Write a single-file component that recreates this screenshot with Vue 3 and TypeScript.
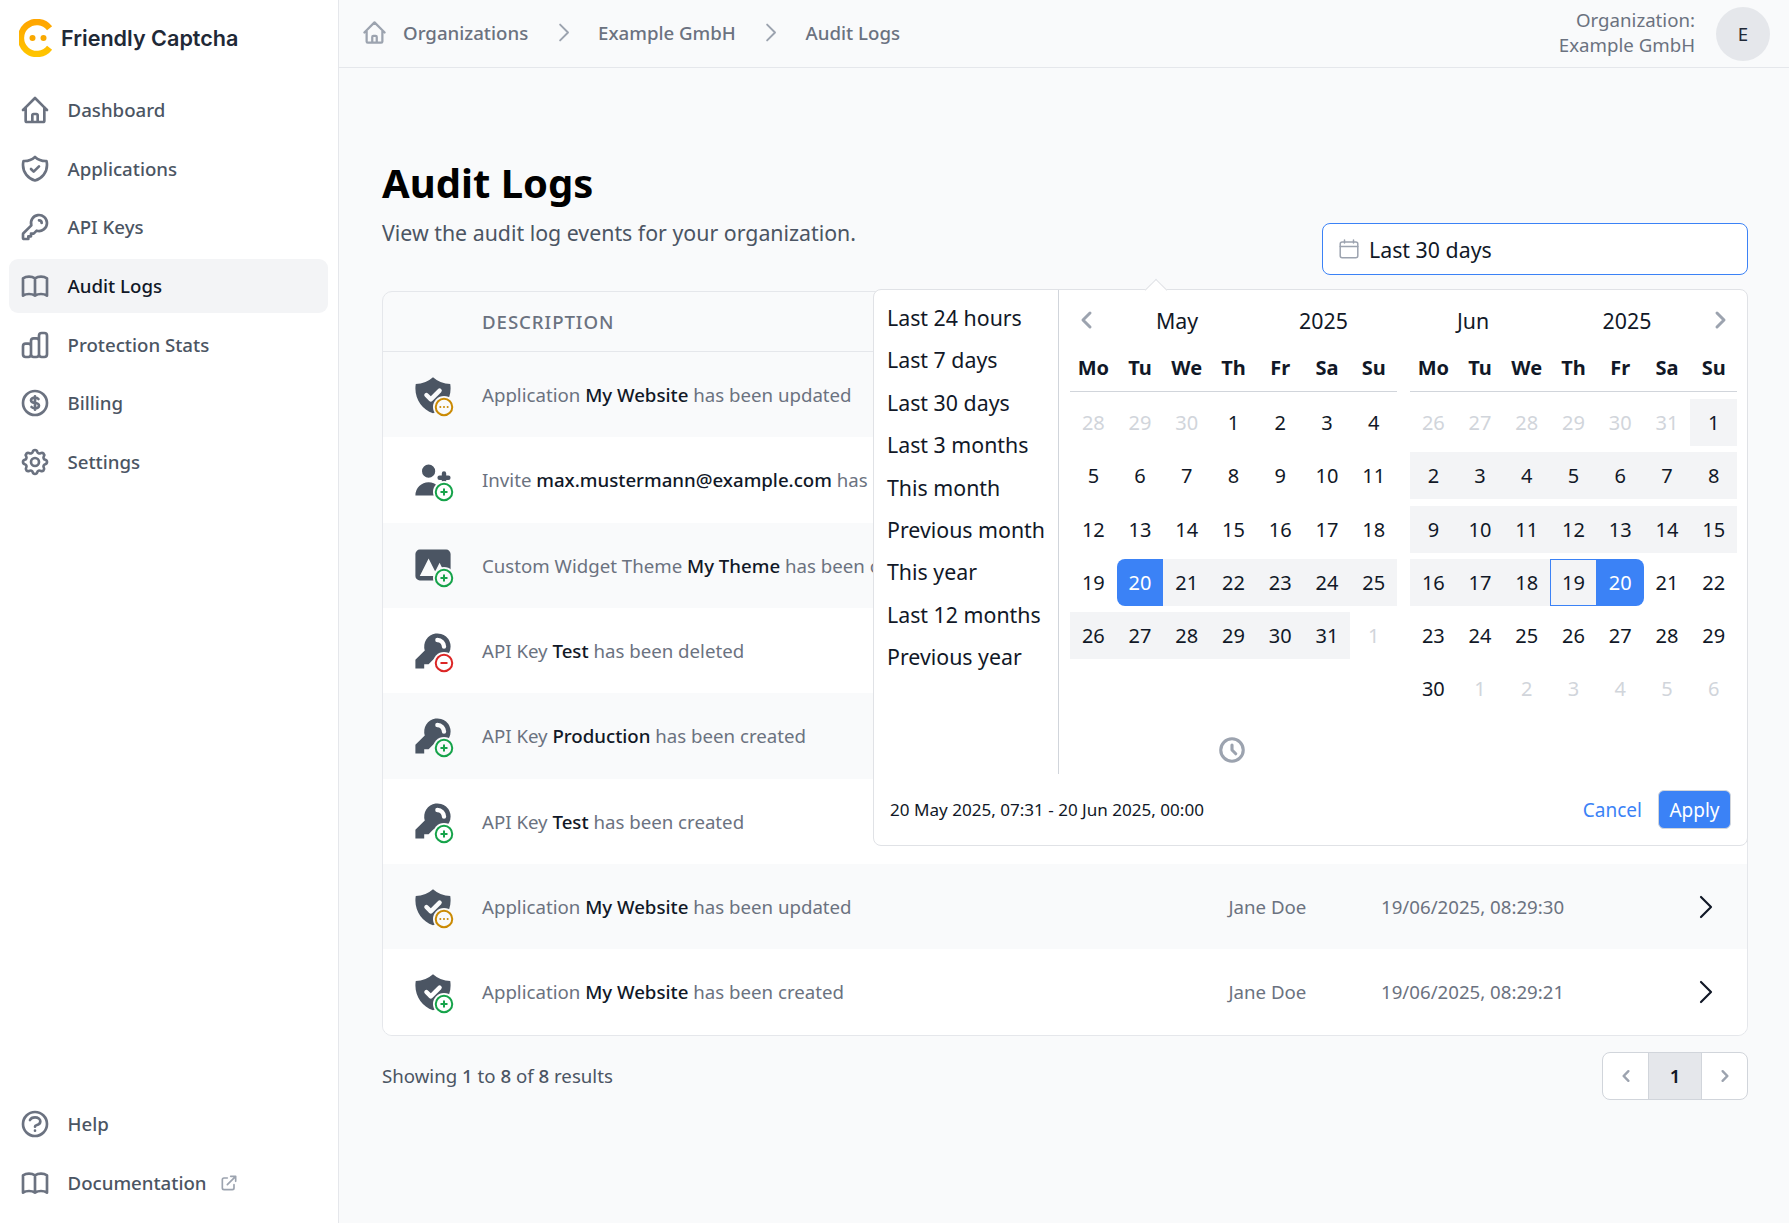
<script setup lang="ts">
interface NavItem {
  label: string
  icon: string
  active?: boolean
  external?: boolean
}

interface LogRow {
  icon: string
  kind: 'add' | 'update' | 'remove'
  before: string
  name: string
  after: string
}

interface DayCell {
  day: number
  muted?: boolean
  range?: boolean
  start?: boolean
  end?: boolean
  today?: boolean
}

const outline: Record<string, string> = {
  home: 'M3 12l2-2m0 0l7-7 7 7M5 10v10a1 1 0 001 1h3m10-11l2 2m-2-2v10a1 1 0 01-1 1h-3m-6 0a1 1 0 001-1v-4a1 1 0 011-1h2a1 1 0 011 1v4a1 1 0 001 1m-6 0h6',
  shield: 'M9 12l2 2 4-4m5.618-4.016A11.955 11.955 0 0112 2.944a11.955 11.955 0 01-8.618 3.04A12.02 12.02 0 003 9c0 5.591 3.824 10.29 9 11.622 5.176-1.332 9-6.03 9-11.622 0-1.042-.133-2.052-.382-3.016z',
  key: 'M15 7a2 2 0 012 2m4 0a6 6 0 01-7.743 5.743L11 17H9v2H7v2H4a1 1 0 01-1-1v-2.586a1 1 0 01.293-.707l5.964-5.964A6 6 0 1121 9z',
  book: 'M12 6.253v13m0-13C10.832 5.477 9.246 5 7.5 5S4.168 5.477 3 6.253v13C4.168 18.477 5.754 18 7.5 18s3.332.477 4.5 1.253m0-13C13.168 5.477 14.754 5 16.5 5c1.747 0 3.332.477 4.5 1.253v13C19.832 18.477 18.247 18 16.5 18c-1.746 0-3.332.477-4.5 1.253',
  chart: 'M9 19v-6a2 2 0 00-2-2H5a2 2 0 00-2 2v6a2 2 0 002 2h2a2 2 0 002-2zm0 0V9a2 2 0 012-2h2a2 2 0 012 2v10m-6 0a2 2 0 002 2h2a2 2 0 002-2m0 0V5a2 2 0 012-2h2a2 2 0 012 2v14a2 2 0 01-2 2h-2a2 2 0 01-2-2z',
  dollar: 'M12 8c-1.657 0-3 .895-3 2s1.343 2 3 2 3 .895 3 2-1.343 2-3 2m0-8c1.11 0 2.08.402 2.599 1M12 8V7m0 1v8m0 0v1m0-1c-1.11 0-2.08-.402-2.599-1M21 12a9 9 0 11-18 0 9 9 0 0118 0z',
  cog: 'M10.325 4.317c.426-1.756 2.924-1.756 3.35 0a1.724 1.724 0 002.573 1.066c1.543-.94 3.31.826 2.37 2.37a1.724 1.724 0 001.065 2.572c1.756.426 1.756 2.924 0 3.35a1.724 1.724 0 00-1.066 2.573c.94 1.543-.826 3.31-2.37 2.37a1.724 1.724 0 00-2.572 1.065c-.426 1.756-2.924 1.756-3.35 0a1.724 1.724 0 00-2.573-1.066c-1.543.94-3.31-.826-2.37-2.37a1.724 1.724 0 00-1.065-2.572c-1.756-.426-1.756-2.924 0-3.35a1.724 1.724 0 001.066-2.573c-.94-1.543.826-3.31 2.37-2.37.996.608 2.296.07 2.572-1.065zM15 12a3 3 0 11-6 0 3 3 0 016 0z',
  help: 'M8.228 9c.549-1.165 2.03-2 3.772-2 2.21 0 4 1.343 4 3 0 1.4-1.278 2.575-3.006 2.907-.542.104-.994.54-.994 1.093m0 3h.01M21 12a9 9 0 11-18 0 9 9 0 0118 0z'
}

const solid: Record<string, string> = {
  shield: 'M2.166 4.999A11.954 11.954 0 0010 1.944 11.954 11.954 0 0017.834 5c.11.65.166 1.32.166 2.001 0 5.225-3.34 9.67-8 11.317C5.34 16.67 2 12.225 2 7c0-.682.057-1.35.166-2.001zm11.541 3.708a1 1 0 00-1.414-1.414L9 10.586 7.707 9.293a1 1 0 00-1.414 1.414l2 2a1 1 0 001.414 0l4-4z',
  user: 'M8 9a3 3 0 100-6 3 3 0 000 6zM8 11a6 6 0 016 6H2a6 6 0 016-6zM16 7a1 1 0 10-2 0v1h-1a1 1 0 100 2h1v1a1 1 0 102 0v-1h1a1 1 0 100-2h-1V7z',
  photo: 'M4 3a2 2 0 00-2 2v10a2 2 0 002 2h12a2 2 0 002-2V5a2 2 0 00-2-2H4zm12 12H4l4-8 3 6 2-4 3 6z',
  key: 'M18 8a6 6 0 01-7.743 5.743L10 14l-1 1-1 1H6v2H2v-4l4.257-4.257A6 6 0 1118 8zm-6-4a1 1 0 100 2 2 2 0 012 2 1 1 0 102 0 4 4 0 00-4-4z'
}

const badges: Record<LogRow['kind'], string> = {
  add: 'M12 9v3m0 0v3m0-3h3m-3 0H9m12 0a9 9 0 11-18 0 9 9 0 0118 0z',
  update: 'M8 12h.01M12 12h.01M16 12h.01M21 12a9 9 0 11-18 0 9 9 0 0118 0z',
  remove: 'M15 12H9m12 0a9 9 0 11-18 0 9 9 0 0118 0z'
}

const mainNav: NavItem[] = [
  { label: 'Dashboard', icon: 'home' },
  { label: 'Applications', icon: 'shield' },
  { label: 'API Keys', icon: 'key' },
  { label: 'Audit Logs', icon: 'book', active: true },
  { label: 'Protection Stats', icon: 'chart' },
  { label: 'Billing', icon: 'dollar' },
  { label: 'Settings', icon: 'cog' }
]

const bottomNav: NavItem[] = [
  { label: 'Help', icon: 'help' },
  { label: 'Documentation', icon: 'book', external: true }
]

const rows: (LogRow & { user: string; time: string })[] = [
  { icon: 'shield', kind: 'update', before: 'Application', name: 'My Website', after: 'has been updated', user: 'Jane Doe', time: '19/06/2025, 08:31:02' },
  { icon: 'user', kind: 'add', before: 'Invite', name: 'max.mustermann@example.com', after: 'has been created', user: 'Jane Doe', time: '19/06/2025, 08:30:48' },
  { icon: 'photo', kind: 'add', before: 'Custom Widget Theme', name: 'My Theme', after: 'has been created', user: 'Jane Doe', time: '19/06/2025, 08:30:31' },
  { icon: 'key', kind: 'remove', before: 'API Key', name: 'Test', after: 'has been deleted', user: 'Jane Doe', time: '19/06/2025, 08:30:12' },
  { icon: 'key', kind: 'add', before: 'API Key', name: 'Production', after: 'has been created', user: 'Jane Doe', time: '19/06/2025, 08:30:04' },
  { icon: 'key', kind: 'add', before: 'API Key', name: 'Test', after: 'has been created', user: 'Jane Doe', time: '19/06/2025, 08:29:51' },
  { icon: 'shield', kind: 'update', before: 'Application', name: 'My Website', after: 'has been updated', user: 'Jane Doe', time: '19/06/2025, 08:29:30' },
  { icon: 'shield', kind: 'add', before: 'Application', name: 'My Website', after: 'has been created', user: 'Jane Doe', time: '19/06/2025, 08:29:21' }
]

const presets = [
  'Last 24 hours',
  'Last 7 days',
  'Last 30 days',
  'Last 3 months',
  'This month',
  'Previous month',
  'This year',
  'Last 12 months',
  'Previous year'
]

const weekdays = ['Mo', 'Tu', 'We', 'Th', 'Fr', 'Sa', 'Su']

const mayDays: DayCell[] = [
  { day: 28, muted: true },
  { day: 29, muted: true },
  { day: 30, muted: true },
  ...[1, 2, 3, 4, 5, 6, 7, 8, 9, 10, 11, 12, 13, 14, 15, 16, 17, 18, 19].map((day) => ({ day })),
  { day: 20, start: true },
  ...[21, 22, 23, 24, 25, 26, 27, 28, 29, 30, 31].map((day) => ({ day, range: true })),
  { day: 1, muted: true }
]

const juneDays: DayCell[] = [
  ...[26, 27, 28, 29, 30, 31].map((day) => ({ day, muted: true })),
  ...[1, 2, 3, 4, 5, 6, 7, 8, 9, 10, 11, 12, 13, 14, 15, 16, 17, 18].map((day) => ({ day, range: true })),
  { day: 19, range: true, today: true },
  { day: 20, end: true },
  ...[21, 22, 23, 24, 25, 26, 27, 28, 29, 30].map((day) => ({ day })),
  ...[1, 2, 3, 4, 5, 6].map((day) => ({ day, muted: true }))
]
</script>

<template>
  <div class="app">
    <!-- Sidebar -->
    <aside class="sidebar">
      <div class="brand">
        <svg class="brand-logo" viewBox="0 0 38 38" fill="none">
          <defs>
            <linearGradient id="logo-grad" x1="0" y1="0" x2="0" y2="1">
              <stop offset="0" stop-color="#ffa600" />
              <stop offset="1" stop-color="#ffc400" />
            </linearGradient>
          </defs>
          <path d="M30.6 9.2A16 16 0 1 0 30.6 28.8" stroke="url(#logo-grad)" stroke-width="6.4" />
          <circle cx="13.5" cy="19" r="3" fill="#f9a800" />
          <circle cx="24.5" cy="19" r="3" fill="#f9a800" />
        </svg>
        <span class="brand-name">Friendly Captcha</span>
      </div>

      <nav class="nav">
        <a v-for="item in mainNav" :key="item.label" class="nav-item" :class="{ active: item.active }">
          <svg class="nav-icon" viewBox="0 0 24 24" fill="none" stroke="currentColor" stroke-width="2" stroke-linecap="round" stroke-linejoin="round">
            <path :d="outline[item.icon]" />
          </svg>
          <span>{{ item.label }}</span>
        </a>
      </nav>

      <nav class="nav nav-bottom">
        <a v-for="item in bottomNav" :key="item.label" class="nav-item">
          <svg class="nav-icon" viewBox="0 0 24 24" fill="none" stroke="currentColor" stroke-width="2" stroke-linecap="round" stroke-linejoin="round">
            <path :d="outline[item.icon]" />
          </svg>
          <span>{{ item.label }}</span>
          <svg v-if="item.external" class="ext-icon" viewBox="0 0 24 24" fill="none" stroke="currentColor" stroke-width="2" stroke-linecap="round" stroke-linejoin="round">
            <path d="M10 6H6a2 2 0 00-2 2v10a2 2 0 002 2h10a2 2 0 002-2v-4M14 4h6m0 0v6m0-6L10 14" />
          </svg>
        </a>
      </nav>
    </aside>

    <div class="main">
      <!-- Top bar -->
      <header class="topbar">
        <div class="crumbs">
          <svg class="crumb-home" viewBox="0 0 24 24" fill="none" stroke="currentColor" stroke-width="2" stroke-linecap="round" stroke-linejoin="round">
            <path :d="outline.home" />
          </svg>
          <span>Organizations</span>
          <svg class="crumb-sep" viewBox="0 0 24 24" fill="none" stroke="currentColor" stroke-width="1.7" stroke-linecap="round" stroke-linejoin="round">
            <path d="M9 5l7 7-7 7" />
          </svg>
          <span>Example GmbH</span>
          <svg class="crumb-sep" viewBox="0 0 24 24" fill="none" stroke="currentColor" stroke-width="1.7" stroke-linecap="round" stroke-linejoin="round">
            <path d="M9 5l7 7-7 7" />
          </svg>
          <span>Audit Logs</span>
        </div>
        <div class="org">
          <div class="org-text">
            <div>Organization:</div>
            <div>Example GmbH</div>
          </div>
          <div class="avatar">E</div>
        </div>
      </header>

      <main class="content">
        <div class="page-head">
          <div class="page-intro">
            <h1 class="page-title">Audit Logs</h1>
            <p class="page-sub">View the audit log events for your organization.</p>
          </div>

          <div class="date-field">
            <div class="date-input">
              <svg class="date-icon" viewBox="0 0 20 20" fill="none" stroke="currentColor" stroke-width="1.5" stroke-linecap="round">
                <rect x="1.2" y="3" width="17.6" height="15.8" rx="2" />
                <path d="M1.2 7.4h17.6M5.5 1v3M14.5 1v3" />
              </svg>
              <span>Last 30 days</span>
            </div>

            <!-- Date range popup -->
            <div class="picker">
              <span class="picker-arrow"></span>
              <div class="picker-body">
                <ul class="presets">
                  <li v-for="preset in presets" :key="preset">{{ preset }}</li>
                </ul>
                <div class="calendars">
                  <div class="calendar">
                    <div class="cal-head cal-head-left">
                      <svg class="cal-nav" viewBox="0 0 24 24" fill="none" stroke="currentColor" stroke-width="3" stroke-linecap="round" stroke-linejoin="round">
                        <path d="M15 19l-7-7 7-7" />
                      </svg>
                      <span>May</span>
                      <span>2025</span>
                    </div>
                    <div class="weekdays">
                      <span v-for="name in weekdays" :key="name">{{ name }}</span>
                    </div>
                    <div class="days">
                      <span
                        v-for="(cell, i) in mayDays"
                        :key="i"
                        class="day"
                        :class="{ muted: cell.muted, range: cell.range, start: cell.start, end: cell.end, today: cell.today }"
                      >{{ cell.day }}</span>
                    </div>
                    <div class="time-toggle">
                      <svg viewBox="0 0 24 24" fill="none" stroke="currentColor" stroke-width="2.5" stroke-linecap="round" stroke-linejoin="round">
                        <path d="M12 8v4l3 3m6-3a9 9 0 11-18 0 9 9 0 0118 0z" />
                      </svg>
                    </div>
                  </div>

                  <div class="calendar">
                    <div class="cal-head cal-head-right">
                      <span>Jun</span>
                      <span class="year-right">2025</span>
                      <svg class="cal-nav" viewBox="0 0 24 24" fill="none" stroke="currentColor" stroke-width="3" stroke-linecap="round" stroke-linejoin="round">
                        <path d="M9 5l7 7-7 7" />
                      </svg>
                    </div>
                    <div class="weekdays">
                      <span v-for="name in weekdays" :key="name">{{ name }}</span>
                    </div>
                    <div class="days">
                      <span
                        v-for="(cell, i) in juneDays"
                        :key="i"
                        class="day"
                        :class="{ muted: cell.muted, range: cell.range, start: cell.start, end: cell.end, today: cell.today }"
                      >{{ cell.day }}</span>
                    </div>
                  </div>
                </div>
              </div>
              <div class="picker-foot">
                <span>20 May 2025, 07:31 - 20 Jun 2025, 00:00</span>
                <div class="picker-actions">
                  <button class="btn-cancel">Cancel</button>
                  <button class="btn-apply">Apply</button>
                </div>
              </div>
            </div>
          </div>
        </div>

        <!-- Log table -->
        <div class="table">
          <div class="table-head">
            <span></span>
            <span>Description</span>
            <span>User</span>
            <span>Date</span>
            <span></span>
          </div>
          <div v-for="(row, i) in rows" :key="i" class="table-row">
            <div class="row-icon">
              <svg class="row-main" viewBox="0 0 20 20" fill="currentColor">
                <path fill-rule="evenodd" clip-rule="evenodd" :d="solid[row.icon]" />
              </svg>
              <svg class="row-badge" :class="row.kind" viewBox="0 0 24 24" fill="none" stroke="currentColor" stroke-width="2.2" stroke-linecap="round" stroke-linejoin="round">
                <path :d="badges[row.kind]" />
              </svg>
            </div>
            <div class="row-desc">{{ row.before }} <strong>{{ row.name }}</strong> {{ row.after }}</div>
            <div>{{ row.user }}</div>
            <div>{{ row.time }}</div>
            <svg class="row-chevron" viewBox="0 0 24 24" fill="none" stroke="currentColor" stroke-width="1.6" stroke-linecap="round" stroke-linejoin="round">
              <path d="M8.25 4.5l7.5 7.5-7.5 7.5" />
            </svg>
          </div>
        </div>

        <div class="table-foot">
          <span class="results">Showing <b>1</b> to <b>8</b> of <b>8</b> results</span>
          <div class="pager">
            <span class="pager-btn">
              <svg viewBox="0 0 20 20" fill="currentColor">
                <path d="M12.707 5.293a1 1 0 010 1.414L9.414 10l3.293 3.293a1 1 0 01-1.414 1.414l-4-4a1 1 0 010-1.414l4-4a1 1 0 011.414 0z" />
              </svg>
            </span>
            <span class="pager-current">1</span>
            <span class="pager-btn">
              <svg viewBox="0 0 20 20" fill="currentColor">
                <path d="M7.293 14.707a1 1 0 010-1.414L10.586 10 7.293 6.707a1 1 0 011.414-1.414l4 4a1 1 0 010 1.414l-4 4a1 1 0 01-1.414 0z" />
              </svg>
            </span>
          </div>
        </div>
      </main>
    </div>
  </div>
</template>

<style>
html,
body {
  margin: 0;
  background: #f9fafb;
}
</style>

<style scoped>
.app {
  display: flex;
  height: 100vh;
  overflow: hidden;
  background: #f9fafb;
  font-family: "Noto Sans", "Liberation Sans", sans-serif;
  font-size: 18.67px;
  color: #111827;
}

/* Sidebar */
.sidebar {
  width: 338px;
  flex-shrink: 0;
  display: flex;
  flex-direction: column;
  background: #ffffff;
  border-right: 1px solid #e5e7eb;
}

.brand {
  height: 76px;
  display: flex;
  align-items: center;
  gap: 4px;
  padding-left: 19px;
  margin-bottom: 7px;
}

.brand-logo {
  width: 38px;
  height: 38px;
  flex-shrink: 0;
}

.brand-name {
  font-family: Inter, "Liberation Sans", sans-serif;
  font-size: 21.6px;
  font-weight: 600;
  color: #1f2937;
}

.nav {
  display: flex;
  flex-direction: column;
  gap: 4.7px;
  padding: 0 10px 0 9px;
}

.nav-bottom {
  margin-top: auto;
  padding-bottom: 13px;
}

.nav-item {
  height: 54px;
  display: flex;
  align-items: center;
  gap: 16.5px;
  padding-left: 10px;
  border-radius: 9px;
  font-weight: 500;
  color: #4b5563;
}

.nav-item span {
  padding-bottom: 1px;
}

.nav-item.active {
  background: #f3f4f6;
  color: #111827;
}

.nav-icon {
  width: 32px;
  height: 32px;
  flex-shrink: 0;
  color: #6b7280;
}

.ext-icon {
  width: 20px;
  height: 20px;
  margin-left: -4px;
  color: #9ca3af;
}

/* Top bar */
.main {
  flex: 1;
  min-width: 0;
  display: flex;
  flex-direction: column;
}

.topbar {
  height: 67px;
  flex-shrink: 0;
  display: flex;
  align-items: center;
  justify-content: space-between;
  padding: 0 19px 0 22px;
  border-bottom: 1px solid #e5e7eb;
}

.crumbs {
  display: flex;
  align-items: center;
  padding-bottom: 2px;
  font-weight: 500;
  color: #6b7280;
}

.crumb-home {
  width: 27px;
  height: 27px;
  margin-right: 15px;
  color: #9ca3af;
}

.crumb-sep {
  width: 27px;
  height: 27px;
  margin: 0 21.4px;
  color: #9ca3af;
}

.org {
  display: flex;
  align-items: center;
  gap: 21px;
}

.org-text {
  padding-bottom: 4px;
  text-align: right;
  line-height: 25px;
  color: #6b7280;
}

.avatar {
  width: 54px;
  height: 54px;
  display: flex;
  align-items: center;
  justify-content: center;
  border-radius: 50%;
  background: #e5e7eb;
  color: #1f2937;
}

/* Content */
.content {
  flex: 1;
  padding: 93px 41px 0 43px;
}

.page-head {
  display: flex;
  align-items: flex-end;
  justify-content: space-between;
  margin-bottom: 16px;
}

.page-intro {
  padding-bottom: 28px;
}

.page-title {
  margin: 0;
  font-size: 40px;
  line-height: 44px;
  font-weight: 700;
  color: #000000;
}

.page-sub {
  margin: 14px 0 0;
  font-size: 21.33px;
  line-height: 28px;
  color: #4b5563;
}

.date-field {
  position: relative;
  width: 426px;
}

.date-input {
  height: 52px;
  box-sizing: border-box;
  display: flex;
  align-items: center;
  gap: 10px;
  padding-left: 16px;
  background: #ffffff;
  border: 1.5px solid #3b82f6;
  border-radius: 8px;
  font-size: 21.33px;
}

.date-icon {
  width: 20px;
  height: 20px;
  color: #9ca3af;
}

/* Date range popup */
.picker {
  position: absolute;
  top: calc(100% + 14px);
  right: 0;
  z-index: 10;
  width: 875px;
  box-sizing: border-box;
  background: #ffffff;
  border: 1px solid #e0e2e6;
  border-radius: 8px;
  font-size: 20px;
}

.picker-arrow {
  position: absolute;
  top: -8px;
  left: 274px;
  width: 15px;
  height: 15px;
  background: #ffffff;
  border-top: 1px solid #e0e2e6;
  border-left: 1px solid #e0e2e6;
  transform: rotate(45deg);
}

.picker-body {
  position: relative;
  display: flex;
  height: 484px;
}

.presets {
  flex-shrink: 0;
  width: 171px;
  margin: 0;
  padding: 7px 0 0 13px;
  list-style: none;
  border-right: 1px solid #d1d5db;
  font-size: 21.33px;
  line-height: 42.4px;
}

.calendars {
  display: flex;
  gap: 13px;
  padding-left: 11px;
}

.calendar {
  width: 327px;
}

.cal-head {
  display: grid;
  box-sizing: border-box;
  height: 62px;
  padding-bottom: 2px;
  align-items: center;
  text-align: center;
  font-size: 21.33px;
}

.cal-head-left {
  grid-template-columns: 34px 146px 147px;
}

.cal-head-right {
  grid-template-columns: 126px 167px 34px;
}

.year-right {
  padding-left: 15px;
}

.cal-nav {
  width: 24px;
  height: 24px;
  justify-self: center;
  color: #9ca3af;
}

.weekdays {
  display: grid;
  grid-template-columns: repeat(7, 1fr);
  height: 32px;
  line-height: 32px;
  padding-bottom: 7px;
  border-bottom: 1px solid #d1d5db;
  text-align: center;
  font-weight: 700;
}

.days {
  display: grid;
  grid-template-columns: repeat(7, 1fr);
  grid-template-rows: repeat(6, 47px);
  row-gap: 6.25px;
  margin-top: 7px;
}

.day {
  display: flex;
  align-items: center;
  justify-content: center;
  box-sizing: border-box;
}

.day.muted {
  color: #d1d5db;
}

.day.range {
  background: #f3f4f6;
}

.day.start,
.day.end {
  background: #3b82f6;
  color: #ffffff;
}

.day.start {
  border-radius: 8px 0 0 8px;
}

.day.end {
  border-radius: 0 8px 8px 0;
}

.day.today {
  border: 1px solid #3b82f6;
}

.time-toggle {
  display: flex;
  justify-content: center;
  margin-top: 23px;
  padding-right: 3px;
  color: #9ca3af;
}

.time-toggle svg {
  width: 30px;
  height: 30px;
}

.picker-foot {
  display: flex;
  align-items: center;
  justify-content: space-between;
  height: 71px;
  padding: 0 16px;
  font-size: 17.07px;
}

.picker-actions {
  display: flex;
  align-items: center;
  gap: 16px;
}

.btn-cancel,
.btn-apply {
  font-family: inherit;
  font-size: 19px;
  border: none;
  background: none;
  cursor: pointer;
  padding: 0;
}

.btn-cancel {
  color: #3b82f6;
}

.btn-apply {
  width: 73px;
  height: 39px;
  background: #3b82f6;
  border: 1px solid #d1d5db;
  border-radius: 6px;
  color: #ffffff;
}

/* Log table */
.table {
  border: 1px solid #e5e7eb;
  border-radius: 10px;
  overflow: hidden;
  color: #6b7280;
}

.table-head,
.table-row {
  display: grid;
  grid-template-columns: 99px 746.5px 152.5px 1fr 83px;
  align-items: center;
}

.table-head {
  height: 59px;
  border-bottom: 1px solid #e5e7eb;
  font-weight: 500;
  text-transform: uppercase;
  letter-spacing: 0.05em;
}

.table-row {
  height: 85.33px;
  background: #ffffff;
}

.table-row:nth-child(even) {
  background: #f9fafb;
}

.row-icon {
  position: relative;
  width: 44px;
  height: 44px;
  margin-left: 28px;
  background: inherit;
  color: #4b5563;
}

.row-main {
  display: block;
  width: 44px;
  height: 44px;
}

.row-badge {
  position: absolute;
  left: 22px;
  top: 23.5px;
  width: 22px;
  height: 22px;
  border-radius: 50%;
  background: inherit;
}

.row-badge.add {
  color: #16a34a;
}

.row-badge.update {
  color: #ca8a04;
}

.row-badge.remove {
  color: #dc2626;
}

.row-desc {
  white-space: nowrap;
}

.row-desc strong {
  font-weight: 500;
  color: #111827;
}

.row-chevron {
  width: 32px;
  height: 32px;
  justify-self: center;
  color: #111827;
}

/* Footer */
.table-foot {
  display: flex;
  align-items: center;
  justify-content: space-between;
  margin-top: 16px;
}

.results {
  color: #4b5563;
}

.results b {
  font-weight: 500;
}

.pager {
  display: flex;
  height: 48px;
  box-sizing: border-box;
  background: #ffffff;
  border: 1px solid #d1d5db;
  border-radius: 8px;
  overflow: hidden;
}

.pager-btn {
  width: 45px;
  display: flex;
  align-items: center;
  justify-content: center;
  color: #9ca3af;
}

.pager-btn svg {
  width: 24px;
  height: 24px;
}

.pager-current {
  width: 54px;
  display: flex;
  align-items: center;
  justify-content: center;
  background: #e5e7eb;
  border-left: 1px solid #d1d5db;
  border-right: 1px solid #d1d5db;
  box-sizing: border-box;
  font-weight: 600;
  color: #111827;
}
</style>
